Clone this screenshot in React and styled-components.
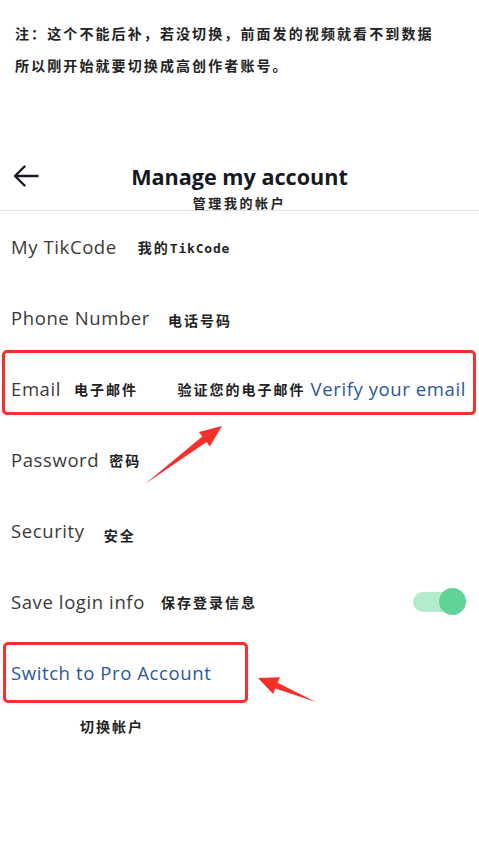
import React from 'react';
import styled, {createGlobalStyle} from 'styled-components';

const GlobalStyle = createGlobalStyle`
    body {
        margin: 0;
        background: #fff;
        font-family: "Open Sans", "Noto Sans CJK SC", sans-serif;
    }
`
const Page = styled.div`
    position: relative;
    width: 479px;
    height: 854px;
    background: #fff;
    overflow: hidden;
`
const Note = styled.div`
    padding: 17px 0 0 15px;
    font-family: "Noto Sans CJK SC", sans-serif;
    font-size: 14px;
    font-weight: 600;
    letter-spacing: 2.1px;
    line-height: 32px;
    color: #222;
`
const Header = styled.div`
    margin-top: 75px;
    border-bottom: 1px solid #e3e3e3;
`
const TitleBar = styled.div`
    display: grid;
    grid-template-columns: 60px 1fr 60px;
    align-items: center;
    height: 40px;
`
const BackButton = styled.div`
    display: flex;
    align-items: center;
    padding-left: 13px;
`
const Title = styled.div`
    text-align: center;
    font-size: 21.6px;
    font-weight: 700;
    color: #161823;
`
const SubTitle = styled.div`
    text-align: center;
    font-family: "Noto Sans CJK SC", sans-serif;
    font-size: 13px;
    font-weight: 600;
    letter-spacing: 2.6px;
    line-height: 14px;
    color: #222;
`
const Row = styled.div`
    position: relative;
    display: flex;
    align-items: center;
    justify-content: space-between;
    height: 71px;
    padding: 0 13px 0 11px;
`
const Left = styled.div`
    display: flex;
    align-items: center;
`
const Label = styled.span`
    font-size: 18.5px;
    letter-spacing: 0.6px;
    color: ${p => p.$blue ? '#2b5797' : '#3a3a3a'};
`
const Hint = styled.span`
    margin-left: ${p => p.$gap || 16}px;
    margin-top: ${p => p.$dy || 0}px;
    font-family: "Noto Sans CJK SC", sans-serif;
    font-size: 14px;
    font-weight: 600;
    letter-spacing: 2px;
    color: #222;
`
const Mono = styled.span`
    font-family: "DejaVu Sans Mono", monospace;
    font-size: 13px;
    font-weight: 700;
    letter-spacing: 0.8px;
`
const Right = styled.div`
    display: flex;
    align-items: center;
    gap: 5px;
`
const Toggle = styled.div`
    position: relative;
    width: 53px;
    height: 27px;
`
const Track = styled.div`
    position: absolute;
    left: 0;
    top: 4px;
    width: 44px;
    height: 20px;
    border-radius: 10px;
    background: #b3ebcd;
`
const Knob = styled.div`
    position: absolute;
    right: 0;
    top: 0;
    width: 27px;
    height: 27px;
    border-radius: 50%;
    background: #5fd398;
`
const Highlight = styled.div`
    position: absolute;
    top: ${p => p.$top}px;
    left: ${p => p.$left}px;
    width: ${p => p.$width}px;
    height: ${p => p.$height}px;
    border: 3px solid #f5302a;
    border-radius: 5px;
    box-sizing: border-box;
    pointer-events: none;
`
const Caption = styled.div`
    margin-top: 9px;
    padding-left: 80px;
    font-family: "Noto Sans CJK SC", sans-serif;
    font-size: 14px;
    font-weight: 600;
    letter-spacing: 2px;
    line-height: 18px;
    color: #222;
`
const Arrows = styled.svg`
    position: absolute;
    top: 0;
    left: 0;
    pointer-events: none;
`

export default function App() {
    return (
        <Page>
            <GlobalStyle />
            <Note>
                <div>注：这个不能后补，若没切换，前面发的视频就看不到数据</div>
                <div>所以刚开始就要切换成高创作者账号。</div>
            </Note>
            <Header>
                <TitleBar>
                    <BackButton>
                        <svg width="26" height="22" viewBox="0 0 26 22" fill="none" stroke="#161823" strokeWidth="2.4" strokeLinecap="round" strokeLinejoin="round">
                            <path d="M24.5 11H2M11.5 1.5L2 11l9.5 9.5" />
                        </svg>
                    </BackButton>
                    <Title>Manage my account</Title>
                    <div />
                </TitleBar>
                <SubTitle>管理我的帐户</SubTitle>
            </Header>
            <Row>
                <Left>
                    <Label>My TikCode</Label>
                    <Hint $gap={21}>我的<Mono>TikCode</Mono></Hint>
                </Left>
            </Row>
            <Row>
                <Left>
                    <Label>Phone Number</Label>
                    <Hint $gap={18} $dy={4}>电话号码</Hint>
                </Left>
            </Row>
            <Row>
                <Highlight $top={-3} $left={2} $width={474} $height={65} />
                <Left>
                    <Label>Email</Label>
                    <Hint $gap={13}>电子邮件</Hint>
                </Left>
                <Right>
                    <Hint $gap={0}>验证您的电子邮件</Hint>
                    <Label $blue>Verify your email</Label>
                </Right>
            </Row>
            <Row>
                <Left>
                    <Label>Password</Label>
                    <Hint $gap={10}>密码</Hint>
                </Left>
            </Row>
            <Row>
                <Left>
                    <Label>Security</Label>
                    <Hint $gap={19} $dy={8}>安全</Hint>
                </Left>
            </Row>
            <Row>
                <Left>
                    <Label>Save login info</Label>
                    <Hint $gap={16}>保存登录信息</Hint>
                </Left>
                <Toggle>
                    <Track />
                    <Knob />
                </Toggle>
            </Row>
            <Row>
                <Highlight $top={5} $left={3} $width={245} $height={61} />
                <Left>
                    <Label $blue>Switch to Pro Account</Label>
                </Left>
            </Row>
            <Caption>切换帐户</Caption>
            <Arrows width="479" height="854" viewBox="0 0 479 854">
                <polygon fill="#f5302a" points="145,484 202.3,436.4 199,432 222,426 209.8,446.4 206.5,442" />
                <polygon fill="#f5302a" points="316,702 277.6,682.8 279.9,677.3 258,678 273.1,693.9 275.4,688.4" />
            </Arrows>
        </Page>
    );
}
